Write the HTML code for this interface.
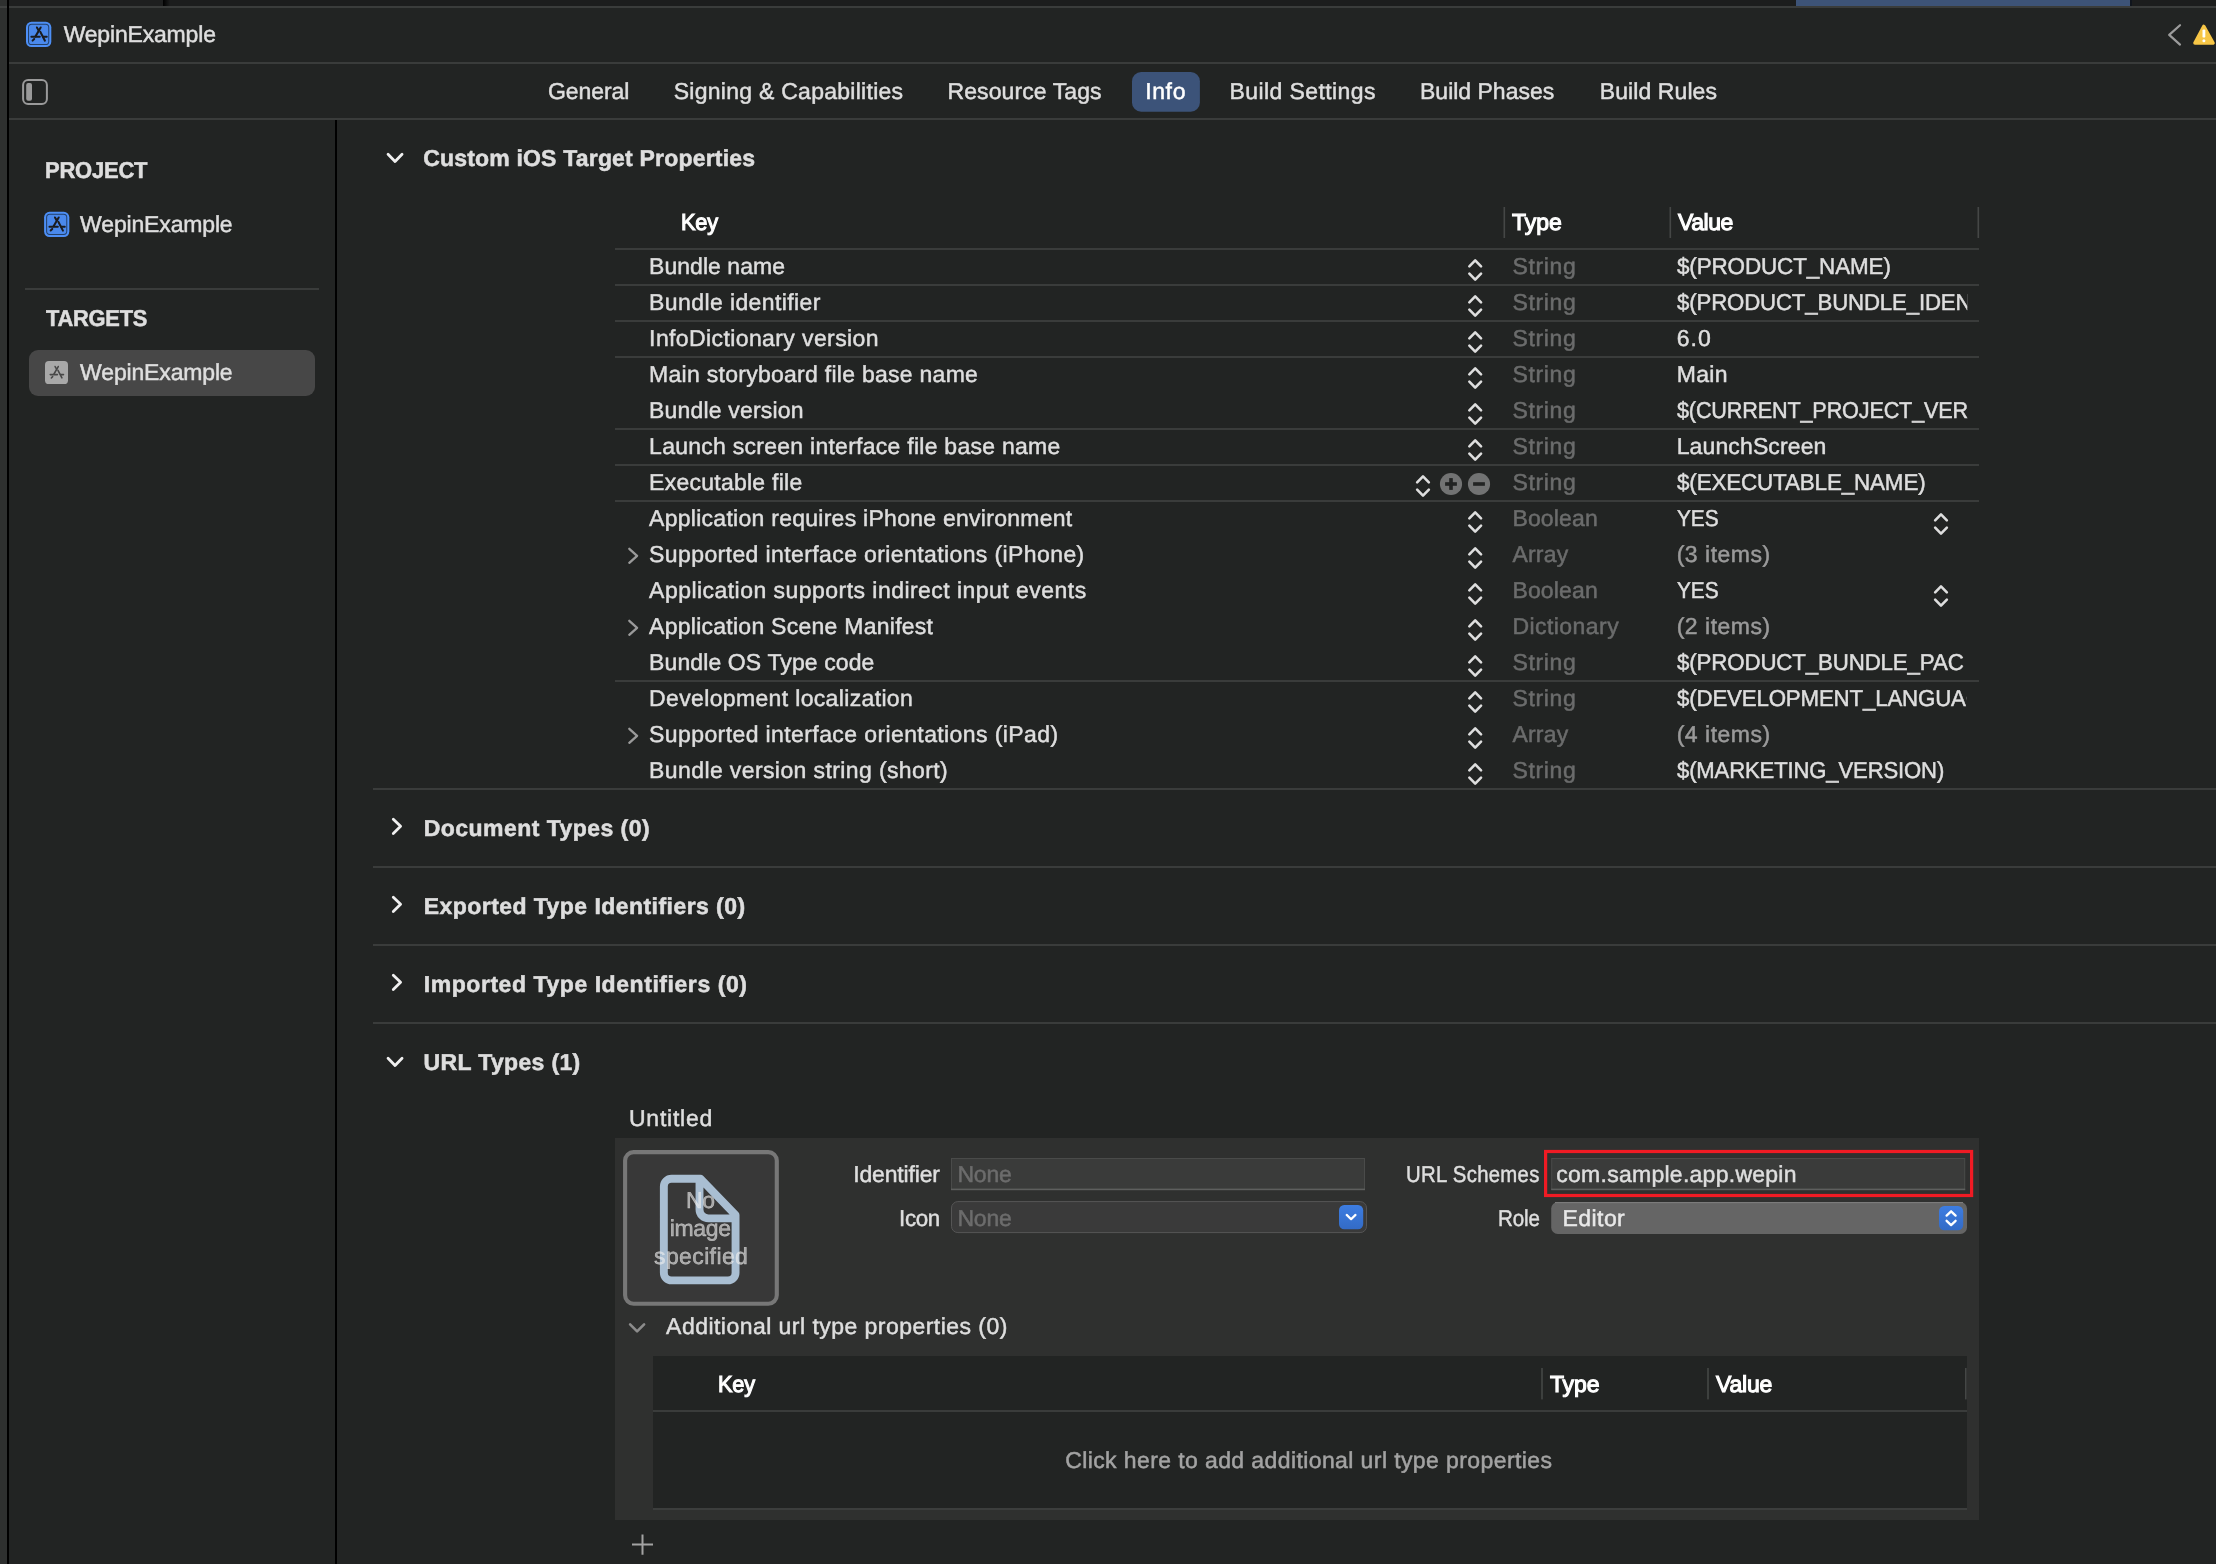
<!DOCTYPE html>
<html lang="en">
<head>
<meta charset="utf-8">
<title>WepinExample — Info</title>
<style>
html,body{margin:0;padding:0}
body{width:2216px;height:1564px;overflow:hidden;position:relative;background:#222423;font-family:"Liberation Sans",sans-serif;color:#dedede}
#art{position:absolute;left:0;top:0}
#txt{position:absolute;left:0;top:0;width:2216px;height:1564px;will-change:transform;text-rendering:geometricPrecision}
.g{display:contents}
.t{display:block;margin:0;padding:0;font-weight:400;text-decoration:none;position:absolute;white-space:nowrap;transform-origin:0 50%;line-height:28px;height:28px;font-size:23px;overflow:visible;-webkit-text-stroke:0.5px currentColor}
.b{font-weight:700;-webkit-text-stroke:0.55px currentColor}
.sb{-webkit-text-stroke:1.1px currentColor}
.clip{overflow:hidden}
</style>
</head>
<body>
<svg id="art" width="2216" height="1564" viewBox="0 0 2216 1564">
<defs><linearGradient id="tabsh" x1="0" x2="1" y1="0" y2="0"><stop offset="0" stop-color="#000"/><stop offset="1" stop-color="#1c1d1d"/></linearGradient><linearGradient id="bluebtn" x1="0" x2="0" y1="0" y2="1"><stop offset="0" stop-color="#3d7de2"/><stop offset="1" stop-color="#336bc6"/></linearGradient></defs>
<rect x="0" y="0" width="2216" height="6" fill="#1e1f1f"/>
<rect x="163" y="0" width="7" height="6" fill="url(#tabsh)"/>
<rect x="170" y="0" width="2046" height="6" fill="#1c1d1d"/>
<rect x="1796" y="0" width="334" height="6" fill="#3d5377"/>
<rect x="2130" y="0" width="2" height="6" fill="#10151d"/>
<rect x="0" y="6" width="2216" height="2" fill="#3a3c3b"/>
<rect x="0" y="62" width="2216" height="2" fill="#3a3c3b"/>
<rect x="0" y="118" width="2216" height="2" fill="#3a3c3b"/>
<rect x="0" y="0" width="7" height="1564" fill="#2e302f"/>
<rect x="0" y="6" width="7" height="2" fill="#3f4140"/>
<rect x="7" y="0" width="2" height="1564" fill="#000"/>
<rect x="335" y="120" width="2" height="1444" fill="#000"/>
<g transform="translate(26,21.8) scale(1.012)"><rect x="0" y="0" width="25" height="25" rx="5.4" fill="#4d8ff6"/><rect x="2.5" y="2.5" width="20" height="20" rx="3.1" fill="#4a89ec" stroke="#234069" stroke-width="1"/><g stroke="#1b1c1e" stroke-width="2" stroke-linecap="round" fill="none"><path d="M14.5,5.6 L9.4,14.4"/><path d="M10.8,5.6 L12.5,8.5"/><path d="M14.1,9.9 L18.7,18.7"/><path d="M5.3,14.8 L13.6,14.8"/><path d="M16.9,14.8 L20.5,14.8"/><path d="M8.1,17 L6.5,18.6"/></g></g>
<path d="M2180,25.2 L2169.2,34.9 L2180,44.6" fill="none" stroke="#9c9c9c" stroke-width="2.2" stroke-linecap="round" stroke-linejoin="round"/>
<path d="M2203.8,26.4 L2213.1,43 L2194.9,43 Z" fill="#f7c646" stroke="#f7c646" stroke-width="3.4" stroke-linejoin="round"/>
<rect x="2202.5" y="29.4" width="2.8" height="8.2" rx="1.2" fill="#fff"/><circle cx="2203.9" cy="40.7" r="1.5" fill="#fff"/>
<rect x="23.1" y="79.9" width="23.8" height="24" rx="5" fill="none" stroke="#9a9a9a" stroke-width="2"/>
<rect x="26.2" y="83" width="5.8" height="17.8" rx="2" fill="#9a9a9a"/>
<rect x="1132" y="72" width="67.9" height="39.8" rx="9.2" fill="#3c5379"/>
<g transform="translate(44.1,211.8) scale(1.008)"><rect x="0" y="0" width="25" height="25" rx="5.4" fill="#4d8ff6"/><rect x="2.5" y="2.5" width="20" height="20" rx="3.1" fill="#4a89ec" stroke="#234069" stroke-width="1"/><g stroke="#1b1c1e" stroke-width="2" stroke-linecap="round" fill="none"><path d="M14.5,5.6 L9.4,14.4"/><path d="M10.8,5.6 L12.5,8.5"/><path d="M14.1,9.9 L18.7,18.7"/><path d="M5.3,14.8 L13.6,14.8"/><path d="M16.9,14.8 L20.5,14.8"/><path d="M8.1,17 L6.5,18.6"/></g></g>
<rect x="25" y="288" width="294" height="2" fill="#3a3c3b"/>
<rect x="29" y="350" width="286" height="46" rx="9" fill="#474747"/>
<g transform="translate(45,361) scale(0.92)"><rect x="0" y="0" width="25" height="25" rx="4.2" fill="#a8a8a8"/><g stroke="#474747" stroke-width="1.7" stroke-linecap="round" fill="none"><path d="M14.4,6 L9.6,14.4"/><path d="M11,6 L12.6,8.8"/><path d="M14.1,10.2 L18.4,18.4"/><path d="M5.7,14.8 L13.5,14.8"/><path d="M16.8,14.8 L20.1,14.8"/><path d="M8.3,17 L6.9,18.4"/></g></g>
<path d="M388.05,154.20000000000002 L395.05,161.4 L402.05,154.20000000000002" fill="none" stroke="#f0f0f0" stroke-width="2.8" stroke-linecap="round" stroke-linejoin="round"/>
<path d="M393.3,819.1999999999999 L400.59999999999997,826.3 L393.3,833.4" fill="none" stroke="#f0f0f0" stroke-width="2.8" stroke-linecap="round" stroke-linejoin="round"/>
<path d="M393.3,897.1999999999999 L400.59999999999997,904.3 L393.3,911.4" fill="none" stroke="#f0f0f0" stroke-width="2.8" stroke-linecap="round" stroke-linejoin="round"/>
<path d="M393.3,975.1999999999999 L400.59999999999997,982.3 L393.3,989.4" fill="none" stroke="#f0f0f0" stroke-width="2.8" stroke-linecap="round" stroke-linejoin="round"/>
<path d="M388.05,1058.2 L395.05,1065.3999999999999 L402.05,1058.2" fill="none" stroke="#f0f0f0" stroke-width="2.8" stroke-linecap="round" stroke-linejoin="round"/>
<rect x="373" y="788" width="1843" height="2" fill="#3a3c3b"/>
<rect x="373" y="866" width="1843" height="2" fill="#3a3c3b"/>
<rect x="373" y="944" width="1843" height="2" fill="#3a3c3b"/>
<rect x="373" y="1022" width="1843" height="2" fill="#3a3c3b"/>
<rect x="1503.5" y="207" width="1.6" height="31" fill="#454746"/>
<rect x="1669.5" y="207" width="1.6" height="31" fill="#454746"/>
<rect x="1977.5" y="207" width="1.6" height="31" fill="#454746"/>
<rect x="615" y="248" width="1364" height="2" fill="#3a3c3b"/>
<rect x="615" y="284" width="1364" height="2" fill="#3a3c3b"/>
<rect x="615" y="320" width="1364" height="2" fill="#3a3c3b"/>
<rect x="615" y="356" width="1364" height="2" fill="#3a3c3b"/>
<rect x="615" y="428" width="1364" height="2" fill="#3a3c3b"/>
<rect x="615" y="464" width="1364" height="2" fill="#3a3c3b"/>
<rect x="615" y="500" width="1364" height="2" fill="#3a3c3b"/>
<rect x="615" y="680" width="1364" height="2" fill="#3a3c3b"/>
<path d="M1469.3500000000001,266.4 L1475.2,260.4 L1481.05,266.4 M1469.3500000000001,273.6 L1475.2,279.6 L1481.05,273.6" fill="none" stroke="#dedede" stroke-width="2.6" stroke-linecap="round" stroke-linejoin="round"/>
<path d="M1469.3500000000001,302.4 L1475.2,296.4 L1481.05,302.4 M1469.3500000000001,309.6 L1475.2,315.6 L1481.05,309.6" fill="none" stroke="#dedede" stroke-width="2.6" stroke-linecap="round" stroke-linejoin="round"/>
<path d="M1469.3500000000001,338.4 L1475.2,332.4 L1481.05,338.4 M1469.3500000000001,345.6 L1475.2,351.6 L1481.05,345.6" fill="none" stroke="#dedede" stroke-width="2.6" stroke-linecap="round" stroke-linejoin="round"/>
<path d="M1469.3500000000001,374.4 L1475.2,368.4 L1481.05,374.4 M1469.3500000000001,381.6 L1475.2,387.6 L1481.05,381.6" fill="none" stroke="#dedede" stroke-width="2.6" stroke-linecap="round" stroke-linejoin="round"/>
<path d="M1469.3500000000001,410.4 L1475.2,404.4 L1481.05,410.4 M1469.3500000000001,417.6 L1475.2,423.6 L1481.05,417.6" fill="none" stroke="#dedede" stroke-width="2.6" stroke-linecap="round" stroke-linejoin="round"/>
<path d="M1469.3500000000001,446.4 L1475.2,440.4 L1481.05,446.4 M1469.3500000000001,453.6 L1475.2,459.6 L1481.05,453.6" fill="none" stroke="#dedede" stroke-width="2.6" stroke-linecap="round" stroke-linejoin="round"/>
<path d="M1417.15,482.4 L1423,476.4 L1428.85,482.4 M1417.15,489.6 L1423,495.6 L1428.85,489.6" fill="none" stroke="#dedede" stroke-width="2.6" stroke-linecap="round" stroke-linejoin="round"/>
<circle cx="1451" cy="484" r="11.1" fill="#727373"/><rect x="1445.1" y="482.2" width="11.8" height="3.6" fill="#222423"/><rect x="1449.2" y="478.1" width="3.6" height="11.8" fill="#222423"/>
<circle cx="1479" cy="484" r="11.1" fill="#727373"/><rect x="1473.1" y="482.2" width="11.8" height="3.6" fill="#222423"/>
<path d="M1469.3500000000001,518.4 L1475.2,512.4 L1481.05,518.4 M1469.3500000000001,525.6 L1475.2,531.6 L1481.05,525.6" fill="none" stroke="#dedede" stroke-width="2.6" stroke-linecap="round" stroke-linejoin="round"/>
<path d="M1935.15,520.4 L1941,514.4 L1946.85,520.4 M1935.15,527.6 L1941,533.6 L1946.85,527.6" fill="none" stroke="#dedede" stroke-width="2.6" stroke-linecap="round" stroke-linejoin="round"/>
<path d="M1469.3500000000001,554.4 L1475.2,548.4 L1481.05,554.4 M1469.3500000000001,561.6 L1475.2,567.6 L1481.05,561.6" fill="none" stroke="#dedede" stroke-width="2.6" stroke-linecap="round" stroke-linejoin="round"/>
<path d="M629.3000000000001,548.8 L637.1,555.8 L629.3000000000001,562.8" fill="none" stroke="#9a9a9a" stroke-width="2.3" stroke-linecap="round" stroke-linejoin="round"/>
<path d="M1469.3500000000001,590.4 L1475.2,584.4 L1481.05,590.4 M1469.3500000000001,597.6 L1475.2,603.6 L1481.05,597.6" fill="none" stroke="#dedede" stroke-width="2.6" stroke-linecap="round" stroke-linejoin="round"/>
<path d="M1935.15,592.4 L1941,586.4 L1946.85,592.4 M1935.15,599.6 L1941,605.6 L1946.85,599.6" fill="none" stroke="#dedede" stroke-width="2.6" stroke-linecap="round" stroke-linejoin="round"/>
<path d="M1469.3500000000001,626.4 L1475.2,620.4 L1481.05,626.4 M1469.3500000000001,633.6 L1475.2,639.6 L1481.05,633.6" fill="none" stroke="#dedede" stroke-width="2.6" stroke-linecap="round" stroke-linejoin="round"/>
<path d="M629.3000000000001,620.8 L637.1,627.8 L629.3000000000001,634.8" fill="none" stroke="#9a9a9a" stroke-width="2.3" stroke-linecap="round" stroke-linejoin="round"/>
<path d="M1469.3500000000001,662.4 L1475.2,656.4 L1481.05,662.4 M1469.3500000000001,669.6 L1475.2,675.6 L1481.05,669.6" fill="none" stroke="#dedede" stroke-width="2.6" stroke-linecap="round" stroke-linejoin="round"/>
<path d="M1469.3500000000001,698.4 L1475.2,692.4 L1481.05,698.4 M1469.3500000000001,705.6 L1475.2,711.6 L1481.05,705.6" fill="none" stroke="#dedede" stroke-width="2.6" stroke-linecap="round" stroke-linejoin="round"/>
<path d="M1469.3500000000001,734.4 L1475.2,728.4 L1481.05,734.4 M1469.3500000000001,741.6 L1475.2,747.6 L1481.05,741.6" fill="none" stroke="#dedede" stroke-width="2.6" stroke-linecap="round" stroke-linejoin="round"/>
<path d="M629.3000000000001,728.8 L637.1,735.8 L629.3000000000001,742.8" fill="none" stroke="#9a9a9a" stroke-width="2.3" stroke-linecap="round" stroke-linejoin="round"/>
<path d="M1469.3500000000001,770.4 L1475.2,764.4 L1481.05,770.4 M1469.3500000000001,777.6 L1475.2,783.6 L1481.05,777.6" fill="none" stroke="#dedede" stroke-width="2.6" stroke-linecap="round" stroke-linejoin="round"/>
<rect x="615" y="1138" width="1364" height="382" fill="#2f302f"/>
<rect x="625.1" y="1152.1" width="151.7" height="151.7" rx="8.5" fill="#383838" stroke="#777777" stroke-width="4.1"/>
<path d="M671.55,1178.75 H700.5 L735.55,1215 V1272.65 a7.7,7.7 0 0 1 -7.7,7.7 H671.55 a7.7,7.7 0 0 1 -7.7,-7.7 V1186.45 a7.7,7.7 0 0 1 7.7,-7.7 Z M699.5,1178.75 V1209.4 a9,9 0 0 0 9,9 H735.55" fill="none" stroke="#a9bed2" stroke-width="7.9" stroke-linejoin="round"/>
<rect x="951.5" y="1158.5" width="413" height="31" fill="#3a3b3a" stroke="#4a4b4a" stroke-width="1"/>
<rect x="951" y="1188.6" width="414" height="1.6" fill="#5e5f5e"/>
<rect x="951.5" y="1201.6" width="415" height="31" rx="6.4" fill="#3a3a3a" stroke="#555555" stroke-width="1"/>
<rect x="1339" y="1205" width="24.2" height="24.2" rx="5.2" fill="url(#bluebtn)"/>
<path d="M1346.7,1214.9 L1351.1,1219.2 L1355.5,1214.9" fill="none" stroke="#fff" stroke-width="2.2" stroke-linecap="round" stroke-linejoin="round"/>
<rect x="1545.6" y="1151.5" width="426" height="44" fill="none" stroke="#f01b24" stroke-width="3.2"/>
<rect x="1551.7" y="1158.5" width="413" height="31" fill="#3a3b3a" stroke="#4a4b4a" stroke-width="1"/>
<rect x="1551.2" y="1188.6" width="414" height="1.6" fill="#5e5f5e"/>
<rect x="1551.2" y="1202" width="415.8" height="32" rx="6.6" fill="#656565"/>
<rect x="1555" y="1202" width="408" height="1.2" fill="#7b7b7b"/>
<rect x="1939" y="1206" width="24.2" height="24.2" rx="5.2" fill="url(#bluebtn)"/>
<path d="M1946.6,1215.6 L1951.1,1211.3 L1955.6,1215.6 M1946.6,1220.8 L1951.1,1225.1 L1955.6,1220.8" fill="none" stroke="#fff" stroke-width="2.3" stroke-linecap="round" stroke-linejoin="round"/>
<path d="M630.1,1324.3 L637.1,1331.3 L644.1,1324.3" fill="none" stroke="#8c8c8c" stroke-width="2.6" stroke-linecap="round" stroke-linejoin="round"/>
<rect x="653" y="1356" width="1314" height="154" fill="#222423"/>
<rect x="653" y="1410" width="1314" height="2" fill="#3a3c3b"/>
<rect x="653" y="1508" width="1314" height="2" fill="#3c3e3d"/>
<rect x="1541.2" y="1368" width="1.6" height="31.4" fill="#454746"/>
<rect x="1707.2" y="1368" width="1.6" height="31.4" fill="#454746"/>
<rect x="1965" y="1368" width="1.6" height="31.4" fill="#454746"/>
<path d="M632,1544.6 H653 M642.5,1534.4 V1554.8" stroke="#a3a3a3" stroke-width="2" fill="none"/>
</svg>
<div id="txt">
<header class="g titlebar">
<span class="t" style="left:63.64px;top:20.03px;color:#dedede;letter-spacing:-0.178px;">WepinExample</span>
</header>
<nav class="g tabs">
<a class="t" style="left:547.96px;top:77.03px;color:#dedede;letter-spacing:-0.059px;">General</a>
<a class="t" style="left:673.67px;top:77.03px;color:#dedede;letter-spacing:0.270px;">Signing &amp; Capabilities</a>
<a class="t" style="left:947.50px;top:77.03px;color:#dedede;letter-spacing:0.088px;">Resource Tags</a>
<a class="t" style="left:1145.16px;top:77.03px;color:#ffffff;letter-spacing:0.643px;">Info</a>
<a class="t" style="left:1229.41px;top:77.03px;color:#dedede;letter-spacing:0.422px;">Build Settings</a>
<a class="t" style="left:1420.00px;top:77.03px;color:#dedede;">Build Phases</a>
<a class="t" style="left:1599.71px;top:77.03px;color:#dedede;letter-spacing:0.093px;">Build Rules</a>
</nav>
<aside class="g sidebar">
<h3 class="t b" style="left:45.00px;top:156.03px;color:#dedede;letter-spacing:-0.207px;transform:scaleX(0.9546);">PROJECT</h3>
<div class="t" style="left:80.12px;top:210.03px;color:#dedede;letter-spacing:-0.157px;">WepinExample</div>
<h3 class="t b" style="left:45.72px;top:304.03px;color:#dedede;letter-spacing:-0.224px;transform:scaleX(0.9490);">TARGETS</h3>
<div class="t" style="left:80.12px;top:358.03px;color:#dedede;letter-spacing:-0.157px;">WepinExample</div>
</aside>
<main class="g editor">
<section class="g plist">
<h2 class="t b" style="left:423.13px;top:144.03px;color:#dedede;letter-spacing:0.190px;">Custom iOS Target Properties</h2>
<div class="g thead" role="row">
<span class="t sb" style="left:680.60px;top:208.03px;color:#ffffff;letter-spacing:-0.196px;transform:scaleX(0.9453);">Key</span>
<span class="t sb" style="left:1512.10px;top:208.03px;color:#ffffff;letter-spacing:-0.050px;">Type</span>
<span class="t sb" style="left:1678.11px;top:208.03px;color:#ffffff;letter-spacing:-0.473px;">Value</span>
</div>
<div class="g row" role="row">
<span class="t" style="left:649.10px;top:252.03px;color:#dedede;letter-spacing:0.030px;">Bundle name</span>
<span class="t" style="left:1512.40px;top:252.03px;color:#6b6c6c;letter-spacing:0.646px;">String</span>
<span class="t" style="left:1676.70px;top:252.03px;color:#dedede;letter-spacing:-0.127px;transform:scaleX(0.9754);">$(PRODUCT_NAME)</span>
</div>
<div class="g row" role="row">
<span class="t" style="left:649.10px;top:288.03px;color:#dedede;letter-spacing:0.398px;">Bundle identifier</span>
<span class="t" style="left:1512.40px;top:288.03px;color:#6b6c6c;letter-spacing:0.646px;">String</span>
<span class="t clip" style="left:1676.70px;top:288.03px;color:#dedede;letter-spacing:-0.131px;transform:scaleX(0.9644);width:301.02px;">$(PRODUCT_BUNDLE_IDENTIFIER)</span>
</div>
<div class="g row" role="row">
<span class="t" style="left:649.10px;top:324.03px;color:#dedede;letter-spacing:0.395px;">InfoDictionary version</span>
<span class="t" style="left:1512.40px;top:324.03px;color:#6b6c6c;letter-spacing:0.646px;">String</span>
<span class="t" style="left:1676.70px;top:324.03px;color:#dedede;letter-spacing:1.122px;">6.0</span>
</div>
<div class="g row" role="row">
<span class="t" style="left:649.10px;top:360.03px;color:#dedede;letter-spacing:0.273px;">Main storyboard file base name</span>
<span class="t" style="left:1512.40px;top:360.03px;color:#6b6c6c;letter-spacing:0.646px;">String</span>
<span class="t" style="left:1676.70px;top:360.03px;color:#dedede;letter-spacing:0.318px;">Main</span>
</div>
<div class="g row" role="row">
<span class="t" style="left:649.10px;top:396.03px;color:#dedede;letter-spacing:0.182px;">Bundle version</span>
<span class="t" style="left:1512.40px;top:396.03px;color:#6b6c6c;letter-spacing:0.646px;">String</span>
<span class="t clip" style="left:1676.70px;top:396.03px;color:#dedede;letter-spacing:-0.155px;transform:scaleX(0.9392);width:309.73px;">$(CURRENT_PROJECT_VERSION)</span>
</div>
<div class="g row" role="row">
<span class="t" style="left:649.10px;top:432.03px;color:#dedede;letter-spacing:0.262px;">Launch screen interface file base name</span>
<span class="t" style="left:1512.40px;top:432.03px;color:#6b6c6c;letter-spacing:0.646px;">String</span>
<span class="t" style="left:1676.70px;top:432.03px;color:#dedede;letter-spacing:0.126px;">LaunchScreen</span>
</div>
<div class="g row" role="row">
<span class="t" style="left:649.10px;top:468.03px;color:#dedede;letter-spacing:0.252px;">Executable file</span>
<span class="t" style="left:1512.40px;top:468.03px;color:#6b6c6c;letter-spacing:0.646px;">String</span>
<span class="t" style="left:1676.70px;top:468.03px;color:#dedede;letter-spacing:-0.153px;transform:scaleX(0.9745);">$(EXECUTABLE_NAME)</span>
</div>
<div class="g row" role="row">
<span class="t" style="left:649.10px;top:504.03px;color:#dedede;letter-spacing:0.267px;">Application requires iPhone environment</span>
<span class="t" style="left:1512.40px;top:504.03px;color:#6b6c6c;letter-spacing:0.164px;">Boolean</span>
<span class="t" style="left:1676.70px;top:504.03px;color:#dedede;letter-spacing:-0.090px;transform:scaleX(0.9065);">YES</span>
</div>
<div class="g row" role="row">
<span class="t" style="left:649.10px;top:540.03px;color:#dedede;letter-spacing:0.394px;">Supported interface orientations (iPhone)</span>
<span class="t" style="left:1512.40px;top:540.03px;color:#6b6c6c;letter-spacing:0.201px;">Array</span>
<span class="t" style="left:1676.70px;top:540.03px;color:#9a9a9a;letter-spacing:0.500px;">(3 items)</span>
</div>
<div class="g row" role="row">
<span class="t" style="left:649.10px;top:576.03px;color:#dedede;letter-spacing:0.463px;">Application supports indirect input events</span>
<span class="t" style="left:1512.40px;top:576.03px;color:#6b6c6c;letter-spacing:0.164px;">Boolean</span>
<span class="t" style="left:1676.70px;top:576.03px;color:#dedede;letter-spacing:-0.090px;transform:scaleX(0.9065);">YES</span>
</div>
<div class="g row" role="row">
<span class="t" style="left:649.10px;top:612.03px;color:#dedede;letter-spacing:0.258px;">Application Scene Manifest</span>
<span class="t" style="left:1512.40px;top:612.03px;color:#6b6c6c;letter-spacing:0.449px;">Dictionary</span>
<span class="t" style="left:1676.70px;top:612.03px;color:#9a9a9a;letter-spacing:0.500px;">(2 items)</span>
</div>
<div class="g row" role="row">
<span class="t" style="left:649.10px;top:648.03px;color:#dedede;letter-spacing:0.108px;">Bundle OS Type code</span>
<span class="t" style="left:1512.40px;top:648.03px;color:#6b6c6c;letter-spacing:0.646px;">String</span>
<span class="t clip" style="left:1676.70px;top:648.03px;color:#dedede;letter-spacing:-0.146px;transform:scaleX(0.9692);width:296.12px;">$(PRODUCT_BUNDLE_PACKAGE_TYPE)</span>
</div>
<div class="g row" role="row">
<span class="t" style="left:649.10px;top:684.03px;color:#dedede;letter-spacing:0.348px;">Development localization</span>
<span class="t" style="left:1512.40px;top:684.03px;color:#6b6c6c;letter-spacing:0.646px;">String</span>
<span class="t clip" style="left:1676.70px;top:684.03px;color:#dedede;letter-spacing:-0.169px;transform:scaleX(0.9681);width:299.36px;">$(DEVELOPMENT_LANGUAGE)</span>
</div>
<div class="g row" role="row">
<span class="t" style="left:649.10px;top:720.03px;color:#dedede;letter-spacing:0.399px;">Supported interface orientations (iPad)</span>
<span class="t" style="left:1512.40px;top:720.03px;color:#6b6c6c;letter-spacing:0.201px;">Array</span>
<span class="t" style="left:1676.70px;top:720.03px;color:#9a9a9a;letter-spacing:0.500px;">(4 items)</span>
</div>
<div class="g row" role="row">
<span class="t" style="left:649.10px;top:756.03px;color:#dedede;letter-spacing:0.393px;">Bundle version string (short)</span>
<span class="t" style="left:1512.40px;top:756.03px;color:#6b6c6c;letter-spacing:0.646px;">String</span>
<span class="t" style="left:1676.70px;top:756.03px;color:#dedede;letter-spacing:-0.142px;transform:scaleX(0.9597);">$(MARKETING_VERSION)</span>
</div>
</section>
<section class="g collapsed">
<h2 class="t b" style="left:423.73px;top:814.03px;color:#dedede;letter-spacing:0.456px;">Document Types (0)</h2>
</section>
<section class="g collapsed">
<h2 class="t b" style="left:423.73px;top:892.03px;color:#dedede;letter-spacing:0.448px;">Exported Type Identifiers (0)</h2>
</section>
<section class="g collapsed">
<h2 class="t b" style="left:423.73px;top:970.03px;color:#dedede;letter-spacing:0.558px;">Imported Type Identifiers (0)</h2>
</section>
<section class="g urltypes">
<h2 class="t b" style="left:423.60px;top:1048.03px;color:#dedede;letter-spacing:0.347px;">URL Types (1)</h2>
<h4 class="t" style="left:628.96px;top:1104.03px;color:#dedede;letter-spacing:0.761px;">Untitled</h4>
<div class="g imagewell">
<span class="t" style="left:686.11px;top:1186.03px;color:rgba(238,238,238,0.6);letter-spacing:-0.380px;">No</span>
<span class="t" style="left:669.66px;top:1214.03px;color:rgba(238,238,238,0.6);letter-spacing:-0.318px;">image</span>
<span class="t" style="left:654.00px;top:1242.03px;color:rgba(238,238,238,0.6);letter-spacing:0.386px;">specified</span>
</div>
<div class="g form">
<label class="t" style="left:853.25px;top:1160.03px;color:#dedede;letter-spacing:-0.172px;">Identifier</label>
<span class="t" style="left:957.41px;top:1160.03px;color:#6c6c6c;letter-spacing:-0.182px;">None</span>
<label class="t" style="left:899.20px;top:1204.03px;color:#dedede;letter-spacing:-0.321px;transform:scaleX(0.9706);">Icon</label>
<span class="t" style="left:957.41px;top:1204.03px;color:#6c6c6c;letter-spacing:-0.182px;">None</span>
<label class="t" style="left:1405.60px;top:1160.03px;color:#dedede;letter-spacing:0.350px;transform:scaleX(0.8837);">URL Schemes</label>
<span class="t" style="left:1556.27px;top:1160.03px;color:#dedede;letter-spacing:0.265px;">com.sample.app.wepin</span>
<label class="t" style="left:1498.00px;top:1204.03px;color:#dedede;letter-spacing:-0.136px;transform:scaleX(0.8946);">Role</label>
<span class="t" style="left:1562.51px;top:1204.03px;color:#e8e8e8;letter-spacing:0.439px;">Editor</span>
</div>
<h4 class="t" style="left:666.08px;top:1312.03px;color:#dedede;letter-spacing:0.463px;">Additional url type properties (0)</h4>
<div class="g thead" role="row">
<span class="t sb" style="left:718.00px;top:1370.03px;color:#ffffff;letter-spacing:-0.196px;transform:scaleX(0.9453);">Key</span>
<span class="t sb" style="left:1549.92px;top:1370.03px;color:#ffffff;letter-spacing:-0.095px;">Type</span>
<span class="t sb" style="left:1715.93px;top:1370.03px;color:#ffffff;letter-spacing:-0.170px;">Value</span>
</div>
<p class="t" style="left:1065.13px;top:1446.03px;color:#a3a3a3;letter-spacing:0.402px;">Click here to add additional url type properties</p>
</section>
</main>
</div>
</body>
</html>
